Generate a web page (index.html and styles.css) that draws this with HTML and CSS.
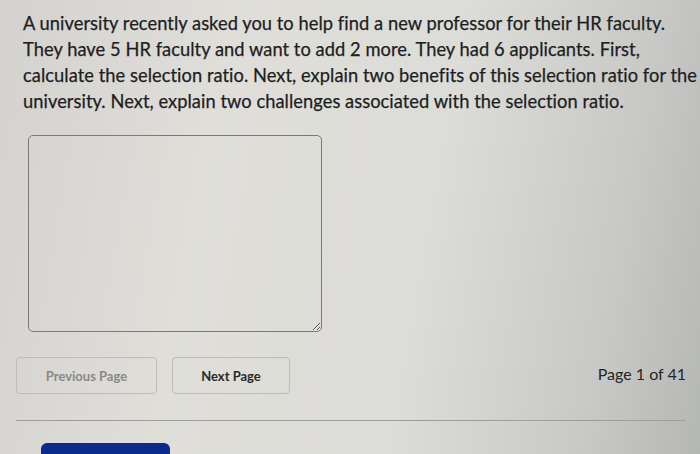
FILE: index.html
```html
<!DOCTYPE html>
<html>
<head>
<meta charset="utf-8">
<link rel="stylesheet" href="styles.css">
</head>
<body>
<div class="page">
  <p class="question">A university recently asked you to help find a new professor for their HR faculty. They have 5 HR faculty and want to add 2 more. They had 6 applicants. First, calculate the selection ratio. Next, explain two benefits of this selection ratio for the university. Next, explain two challenges associated with the selection ratio.</p>
  <div class="answer-wrap"><textarea class="answer"></textarea></div>
  <div class="nav">
    <button class="btn prev">Previous Page</button>
    <button class="btn next">Next Page</button>
    <span class="count">Page 1 of 41</span>
  </div>
  <div class="rule"></div>
  <div class="submit-row"><button class="submit"></button></div>
</div>
</body>
</html>
```
FILE: styles.css
```css
html, body {
  margin: 0;
  height: 100%;
  overflow: hidden;
}
body {
  background: linear-gradient(100deg, #d4d2cf 0%, #dfded9 30%, #dcdcd8 60%, #c8c9c6 85%, #b5b7b4 100%);
  font-family: Lato, "Open Sans", sans-serif;
  color: #222;
}
.page {
  padding: 10px 0 0 16px;
  display: flex;
  flex-direction: column;
}
.question {
  margin: 0 0 0 7px;
  font-size: 18.3px;
  letter-spacing: 0.05px;
  line-height: 26px;
  width: 684px;
  color: #1e1e1e;
  font-variant-ligatures: none;
  -webkit-text-stroke: 0.25px #1e1e1e;
}
.answer-wrap {
  margin-top: 21px;
  padding-left: 12px;
}
.answer {
  display: block;
  width: 294px;
  height: 197px;
  box-sizing: border-box;
  border: 1.5px solid #7a7a78;
  border-radius: 5px;
  background: transparent;
  resize: both;
}
.nav {
  margin-top: 25px;
  margin-right: 14px;
  display: flex;
  align-items: center;
  gap: 15px;
}
.btn {
  height: 37px;
  border: 1px solid #bdbcb8;
  border-radius: 4px;
  background: transparent;
  font-family: Lato, sans-serif;
  font-weight: bold;
  font-size: 13px;
}
.prev {
  width: 141px;
  color: #8a8987;
}
.next {
  width: 118px;
  color: #2a2a2a;
}
.count {
  margin-left: auto;
  font-size: 16px;
  color: #252525;
  margin-top: -4px;
}
.rule {
  margin-top: 26px;
  margin-right: 14px;
  height: 1px;
  background: #9d9e9a;
}
.submit-row {
  padding-left: 25px;
  margin-top: 22px;
}
.submit {
  display: block;
  width: 129px;
  height: 30px;
  border: none;
  border-radius: 6px;
  background: #0a2a8c;
}
```
